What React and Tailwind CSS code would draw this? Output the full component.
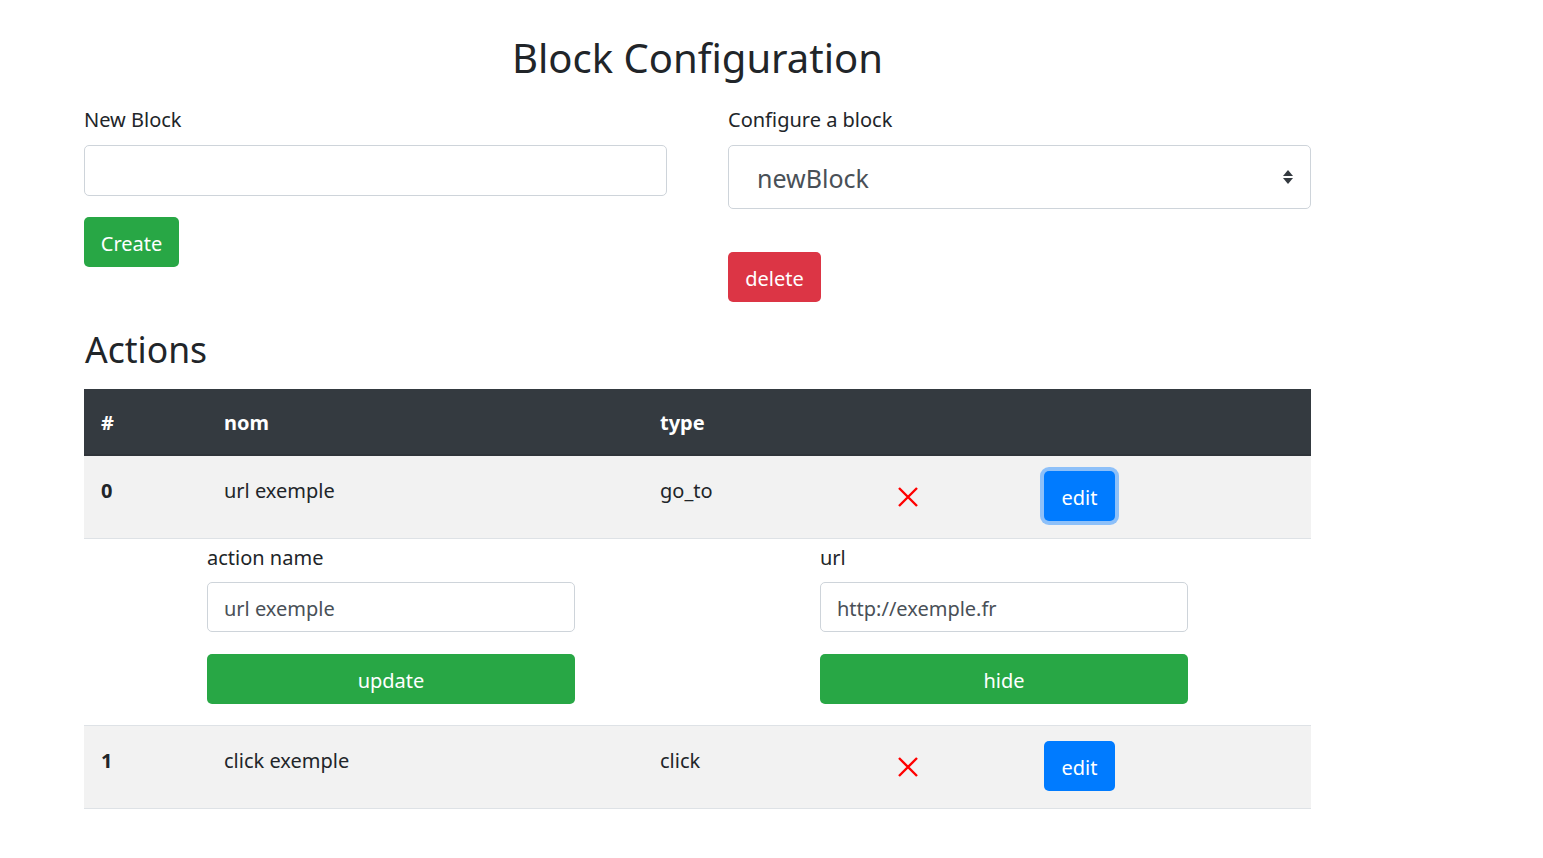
const font = { fontFamily: '"Segoe UI", "Noto Sans", "Open Sans", sans-serif' };

function RedCross() {
  return (
    <svg className="h-[22px] w-[22px]" viewBox="0 0 22 22" aria-label="remove">
      <path d="M2 2L20 20M20 2L2 20" stroke="#ff0000" strokeWidth="2.4" fill="none" />
    </svg>
  );
}

function SelectArrows() {
  return (
    <svg className="h-[16px] w-[12px]" viewBox="0 0 12 16" aria-hidden="true">
      <path d="M6 1L11 7H1z" fill="#343a40" />
      <path d="M6 15L1 9H11z" fill="#343a40" />
    </svg>
  );
}

function ActionRow({ index, name, type, focused }) {
  return (
    <tr className="bg-[#f2f2f2] border-t border-[#dee2e6]">
      <td className="pl-[17px] pt-[17px] pb-[17px] align-top font-bold leading-[36px]">{index}</td>
      <td className="pl-[15px] pt-[17px] align-top leading-[36px]">{name}</td>
      <td className="pl-[15px] pt-[17px] align-top leading-[36px]">{type}</td>
      <td className="pl-[15px] pt-[15px] align-top">
        <div className="flex h-[50px] items-center pt-[2px]">
          <RedCross />
        </div>
      </td>
      <td className="pl-[15px] pt-[15px] pb-[17px] align-top">
        <button
          className={
            "h-[50px] w-[71px] rounded-[5px] bg-[#007bff] pt-[3px] text-white leading-none " +
            (focused ? "shadow-[0_0_0_4px_#8dc0f9]" : "")
          }
        >
          edit
        </button>
      </td>
    </tr>
  );
}

export default function App() {
  return (
    <div className="min-h-screen bg-white text-[#212529] text-[20px]" style={font}>
      <div className="ml-[84px] w-[1227px] pt-[33px]">
        <h1 className="text-center text-[40px] leading-[50px] font-normal">Block Configuration</h1>

        <div className="mt-[22px] grid grid-cols-2 gap-[61px]">
          <div>
            <label className="block leading-[30px]">New Block</label>
            <input className="mt-[10px] block h-[51px] w-full rounded-[5px] border border-[#ced4da] px-[16px] outline-none" />
            <button className="mt-[21px] h-[50px] w-[95px] rounded-[5px] bg-[#28a745] pt-[3px] text-white">Create</button>
          </div>
          <div>
            <label className="block leading-[30px]">Configure a block</label>
            <div className="mt-[10px] flex h-[64px] items-center justify-between rounded-[5px] border border-[#ced4da] pl-[28px] pr-[16px]">
              <span className="pt-[4px] text-[25px] text-[#495057]">newBlock</span>
              <SelectArrows />
            </div>
            <button className="mt-[43px] h-[50px] w-[93px] rounded-[5px] bg-[#dc3545] pt-[3px] text-white">delete</button>
          </div>
        </div>

        <h2 className="mt-[24px] text-[35.5px] leading-[46px] font-normal pl-[1px]">Actions</h2>

        <table className="mt-[17px] w-full table-fixed border-collapse">
          <colgroup>
            <col className="w-[125px]" />
            <col className="w-[436px]" />
            <col className="w-[237px]" />
            <col className="w-[147px]" />
            <col />
          </colgroup>
          <thead>
            <tr className="bg-[#343a40] text-white border-b-2 border-[#2f343a]">
              <th className="h-[66px] pl-[17px] pt-[3px] text-left font-bold">#</th>
              <th className="h-[66px] pl-[15px] pt-[3px] text-left font-bold">nom</th>
              <th className="h-[66px] pl-[15px] pt-[3px] text-left font-bold">type</th>
              <th className="h-[66px]" />
              <th className="h-[66px]" />
            </tr>
          </thead>
          <tbody>
            <ActionRow index="0" name="url exemple" type="go_to" focused />
            <tr className="border-t border-[#dee2e6]">
              <td colSpan={5} className="pt-[4px] pb-[21px]">
                <div className="ml-[123px] grid grid-cols-[613px_1fr]">
                  <div>
                    <label className="block leading-[30px]">action name</label>
                    <input
                      defaultValue="url exemple"
                      className="mt-[9px] block h-[50px] w-[368px] rounded-[5px] border border-[#ced4da] px-[16px] pt-[2px] text-[#495057] outline-none"
                    />
                    <button className="mt-[22px] h-[50px] w-[368px] rounded-[5px] bg-[#28a745] pt-[3px] text-white">update</button>
                  </div>
                  <div>
                    <label className="block leading-[30px]">url</label>
                    <input
                      defaultValue="http://exemple.fr"
                      className="mt-[9px] block h-[50px] w-[368px] rounded-[5px] border border-[#ced4da] px-[16px] pt-[2px] text-[#495057] outline-none"
                    />
                    <button className="mt-[22px] h-[50px] w-[368px] rounded-[5px] bg-[#28a745] pt-[3px] text-white">hide</button>
                  </div>
                </div>
              </td>
            </tr>
            <ActionRow index="1" name="click exemple" type="click" />
            <tr className="border-t border-[#dee2e6]">
              <td colSpan={5} className="pt-[1px]" />
            </tr>
          </tbody>
        </table>
      </div>
    </div>
  );
}
